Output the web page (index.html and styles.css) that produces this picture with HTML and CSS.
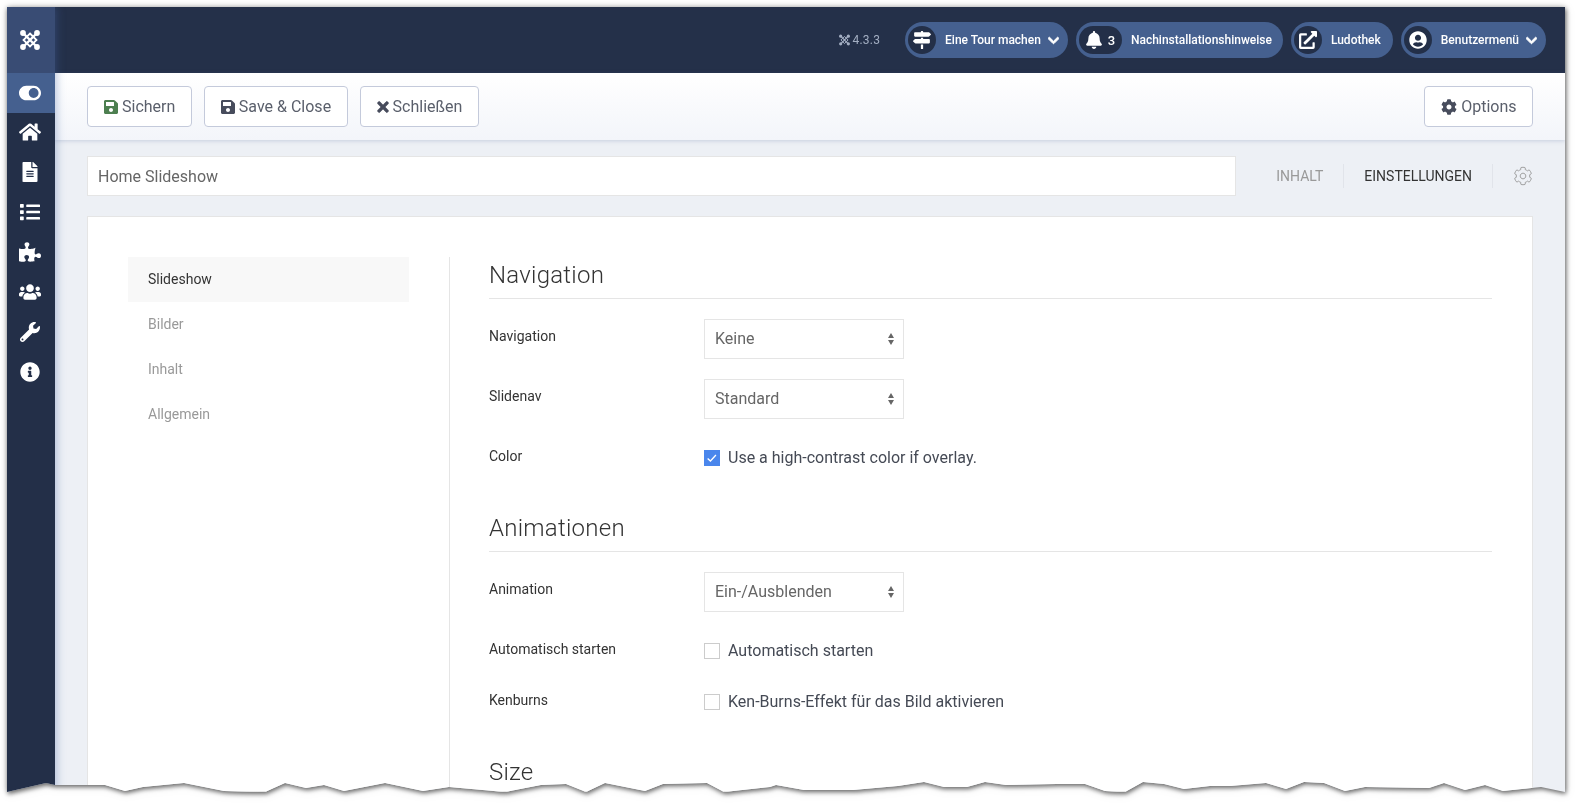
FILE: index.html
```html
<!DOCTYPE html>
<html lang="de">
<head>
  <meta charset="UTF-8">
  <title>Home Slideshow</title>
  <meta name="viewport" content="width=device-width, initial-scale=1">
  <link rel="stylesheet" href="styles.css">
</head>
<body>
<svg class="sprite" aria-hidden="true">
  <symbol id="i-joomla" viewBox="0 0 20 20">
    <g fill="none" stroke="currentColor">
      <path d="M3 3l14 14M17 3L3 17" stroke-width="2.4"/>
      <path d="M10 3.500L16.500 10 10 16.500 3.500 10z" stroke-width="1.800"/>
    </g>
    <g fill="currentColor">
      <circle cx="3" cy="3" r="2.900"/>
      <circle cx="17" cy="3" r="2.900"/>
      <circle cx="3" cy="17" r="2.900"/>
      <circle cx="17" cy="17" r="2.900"/>
    </g>
  </symbol>
  <symbol id="i-toggle" viewBox="0 0 576 512"><path d="M384 64H192C86 64 0 150 0 256s86 192 192 192h192c106 0 192-86 192-192S490 64 384 64zm0 320c-70.800 0-128-57.300-128-128 0-70.800 57.300-128 128-128 70.800 0 128 57.300 128 128 0 70.800-57.300 128-128 128z"/></symbol>
  <symbol id="i-home" viewBox="0 0 576 512"><path d="M280.370 148.260L96 300.110V464a16 16 0 0 0 16 16l112.060-.29a16 16 0 0 0 15.920-16V368a16 16 0 0 1 16-16h64a16 16 0 0 1 16 16v95.640a16 16 0 0 0 16 16.050L464 480a16 16 0 0 0 16-16V300L295.670 148.260a12.190 12.190 0 0 0-15.300 0zM571.600 251.470L488 182.560V44.050a12 12 0 0 0-12-12h-56a12 12 0 0 0-12 12v72.610L318.470 43a48 48 0 0 0-61 0L4.340 251.470a12 12 0 0 0-1.600 16.900l25.500 31A12 12 0 0 0 45.150 301l235.220-193.740a12.190 12.190 0 0 1 15.300 0L530.900 301a12 12 0 0 0 16.900-1.600l25.500-31a12 12 0 0 0-1.700-16.930z"/></symbol>
  <symbol id="i-file" viewBox="0 0 384 512"><path d="M224 136V0H24C10.700 0 0 10.700 0 24v464c0 13.300 10.700 24 24 24h336c13.300 0 24-10.700 24-24V160H248c-13.200 0-24-10.800-24-24zm64 236c0 6.600-5.400 12-12 12H108c-6.600 0-12-5.400-12-12v-8c0-6.600 5.400-12 12-12h168c6.600 0 12 5.400 12 12v8zm0-64c0 6.600-5.400 12-12 12H108c-6.600 0-12-5.400-12-12v-8c0-6.600 5.400-12 12-12h168c6.600 0 12 5.400 12 12v8zm0-72v8c0 6.600-5.400 12-12 12H108c-6.600 0-12-5.400-12-12v-8c0-6.600 5.400-12 12-12h168c6.600 0 12 5.400 12 12zm96-114.100v6.100H256V0h6.100c6.400 0 12.500 2.500 17 7l97.900 98c4.500 4.500 7 10.600 7 16.900z"/></symbol>
  <symbol id="i-list" viewBox="0 0 512 512"><path d="M80 368H16a16 16 0 0 0-16 16v64a16 16 0 0 0 16 16h64a16 16 0 0 0 16-16v-64a16 16 0 0 0-16-16zm0-320H16A16 16 0 0 0 0 64v64a16 16 0 0 0 16 16h64a16 16 0 0 0 16-16V64a16 16 0 0 0-16-16zm0 160H16a16 16 0 0 0-16 16v64a16 16 0 0 0 16 16h64a16 16 0 0 0 16-16v-64a16 16 0 0 0-16-16zm416 176H176a16 16 0 0 0-16 16v32a16 16 0 0 0 16 16h320a16 16 0 0 0 16-16v-32a16 16 0 0 0-16-16zm0-320H176a16 16 0 0 0-16 16v32a16 16 0 0 0 16 16h320a16 16 0 0 0 16-16V80a16 16 0 0 0-16-16zm0 160H176a16 16 0 0 0-16 16v32a16 16 0 0 0 16 16h320a16 16 0 0 0 16-16v-32a16 16 0 0 0-16-16z"/></symbol>
  <symbol id="i-puzzle" viewBox="0 0 576 512"><path d="M519.442 288.651c-41.519 0-59.500 31.593-82.058 31.593C377.409 320.244 432 144 432 144s-196.288 80-196.288-3.297c0-35.827 36.288-46.250 36.288-85.985C272 19.216 243.885 0 210.539 0c-34.654 0-66.366 18.891-66.366 56.346 0 41.364 31.711 59.277 31.711 81.750C175.885 207.719 0 166.758 0 166.758v333.237s178.635 41.047 178.635-28.662c0-22.473-40-40.107-40-81.471 0-37.456 29.250-56.346 63.577-56.346 33.673 0 61.788 19.216 61.788 54.717 0 39.735-36.288 50.158-36.288 85.985 0 60.803 129.675 25.730 181.230 25.730 0 0-34.725-120.101 25.827-120.101 35.962 0 46.423 36.152 86.308 36.152C556.712 416 576 387.990 576 354.443c0-34.199-18.962-65.792-56.558-65.792z"/></symbol>
  <symbol id="i-users" viewBox="0 0 640 512"><path d="M96 224c35.300 0 64-28.700 64-64s-28.700-64-64-64-64 28.700-64 64 28.700 64 64 64zm448 0c35.300 0 64-28.700 64-64s-28.700-64-64-64-64 28.700-64 64 28.700 64 64 64zm32 32h-64c-17.600 0-33.500 7.100-45.100 18.600 40.300 22.100 68.900 62 75.100 109.400h66c17.700 0 32-14.300 32-32v-32c0-35.300-28.700-64-64-64zm-256 0c61.900 0 112-50.100 112-112S381.900 32 320 32 208 82.100 208 144s50.100 112 112 112zm76.800 32h-8.300c-20.800 10-43.900 16-68.500 16s-47.600-6-68.500-16h-8.300C179.600 288 128 339.600 128 403.200V432c0 26.500 21.500 48 48 48h288c26.500 0 48-21.500 48-48v-28.800c0-63.600-51.600-115.200-115.200-115.200zm-223.700-13.400C161.500 263.100 145.600 256 128 256H64c-35.300 0-64 28.700-64 64v32c0 17.700 14.300 32 32 32h65.900c6.300-47.400 34.900-87.300 75.200-109.400z"/></symbol>
  <symbol id="i-wrench" viewBox="0 0 512 512"><path d="M507.730 109.100c-2.240-9.030-13.540-12.090-20.120-5.510l-74.360 74.360-67.880-11.310-11.310-67.880 74.360-74.360c6.620-6.620 3.430-17.900-5.660-20.160-47.380-11.740-99.550.91-136.580 37.930-39.640 39.640-50.550 97.100-34.050 147.200L18.740 402.760c-24.990 24.990-24.990 65.510 0 90.500 24.990 24.990 65.510 24.990 90.500 0l213.210-213.210c50.120 16.710 107.470 5.680 147.370-34.220 37.070-37.070 49.700-89.320 37.910-136.730zM64 472c-13.250 0-24-10.750-24-24 0-13.260 10.750-24 24-24s24 10.740 24 24c0 13.250-10.750 24-24 24z"/></symbol>
  <symbol id="i-info" viewBox="0 0 512 512"><path d="M256 8C119.043 8 8 119.083 8 256c0 136.997 111.043 248 248 248s248-111.003 248-248C504 119.083 392.957 8 256 8zm0 110c23.196 0 42 18.804 42 42s-18.804 42-42 42-42-18.804-42-42 18.804-42 42-42zm56 254c0 6.627-5.373 12-12 12h-88c-6.627 0-12-5.373-12-12v-24c0-6.627 5.373-12 12-12h12v-64h-12c-6.627 0-12-5.373-12-12v-24c0-6.627 5.373-12 12-12h64c6.627 0 12 5.373 12 12v100h12c6.627 0 12 5.373 12 12v24z"/></symbol>
  <symbol id="i-save" viewBox="0 0 448 512"><path d="M433.941 129.941l-83.882-83.882A48 48 0 0 0 316.118 32H48C21.490 32 0 53.490 0 80v352c0 26.510 21.490 48 48 48h352c26.510 0 48-21.490 48-48V163.882a48 48 0 0 0-14.059-33.941zM224 416c-35.346 0-64-28.654-64-64 0-35.346 28.654-64 64-64s64 28.654 64 64c0 35.346-28.654 64-64 64zm96-304.520V212c0 6.627-5.373 12-12 12H76c-6.627 0-12-5.373-12-12V108c0-6.627 5.373-12 12-12h228.520c3.183 0 6.235 1.264 8.485 3.515l3.480 3.480A11.996 11.996 0 0 1 320 111.480z"/></symbol>
  <symbol id="i-times" viewBox="0 0 352 512"><path d="M242.720 256l100.070-100.070c12.280-12.280 12.280-32.190 0-44.480l-22.240-22.240c-12.280-12.280-32.190-12.280-44.480 0L176 189.280 75.930 89.210c-12.280-12.280-32.190-12.280-44.480 0L9.210 111.450c-12.280 12.280-12.280 32.190 0 44.480L109.280 256 9.210 356.070c-12.280 12.280-12.280 32.190 0 44.480l22.240 22.240c12.280 12.280 32.200 12.280 44.480 0L176 322.720l100.070 100.070c12.280 12.280 32.200 12.280 44.480 0l22.240-22.240c12.280-12.280 12.280-32.190 0-44.480L242.720 256z"/></symbol>
  <symbol id="i-cog" viewBox="0 0 512 512"><path d="M487.400 315.700l-42.600-24.600c4.300-23.200 4.300-47 0-70.200l42.600-24.600c4.900-2.800 7.100-8.600 5.500-14-11.100-35.600-30-67.800-54.700-94.600-3.800-4.100-10-5.100-14.800-2.300L380.800 110c-17.900-15.400-38.500-27.300-60.800-35.100V25.800c0-5.600-3.900-10.500-9.400-11.700-36.700-8.200-74.300-7.800-109.200 0-5.500 1.200-9.400 6.100-9.400 11.700V75c-22.200 7.900-42.800 19.800-60.800 35.100L88.700 85.500c-4.900-2.800-11-1.900-14.800 2.300-24.700 26.700-43.600 58.900-54.700 94.600-1.700 5.400.6 11.200 5.500 14L67.300 221c-4.300 23.200-4.300 47 0 70.200l-42.600 24.600c-4.900 2.800-7.100 8.600-5.500 14 11.100 35.600 30 67.800 54.700 94.600 3.800 4.100 10 5.100 14.800 2.300l42.600-24.600c17.900 15.400 38.500 27.300 60.800 35.100v49.200c0 5.600 3.900 10.500 9.400 11.700 36.700 8.200 74.300 7.800 109.200 0 5.500-1.200 9.400-6.100 9.400-11.700v-49.200c22.200-7.900 42.800-19.800 60.800-35.100l42.600 24.600c4.900 2.800 11 1.900 14.800-2.300 24.700-26.700 43.600-58.900 54.700-94.600 1.500-5.500-.7-11.300-5.600-14.100zM256 336c-44.100 0-80-35.900-80-80s35.900-80 80-80 80 35.900 80 80-35.900 80-80 80z"/></symbol>
  <symbol id="i-chevron" viewBox="0 0 448 512"><path d="M207.029 381.476L12.686 187.132c-9.373-9.373-9.373-24.569 0-33.941l22.667-22.667c9.357-9.357 24.522-9.375 33.901-.04L224 284.505l154.745-154.021c9.379-9.335 24.544-9.317 33.901.04l22.667 22.667c9.373 9.373 9.373 24.569 0 33.941L240.971 381.476c-9.373 9.372-24.569 9.372-33.942 0z"/></symbol>
  <symbol id="i-bell" viewBox="0 0 448 512"><path d="M224 512c35.320 0 63.970-28.650 63.970-64H160.030c0 35.350 28.650 64 63.970 64zm215.390-149.710c-19.320-20.760-55.470-51.990-55.470-154.290 0-77.700-54.480-139.900-127.940-155.160V32c0-17.670-14.320-32-31.980-32s-31.980 14.330-31.980 32v20.840C118.560 68.100 64.080 130.300 64.080 208c0 102.300-36.150 133.530-55.470 154.290-6 6.450-8.660 14.160-8.610 21.710.11 16.400 12.980 32 32.100 32h383.800c19.120 0 32-15.600 32.100-32 .05-7.550-2.610-15.270-8.610-21.710z"/></symbol>
  <symbol id="i-link" viewBox="0 0 512 512"><path d="M432 320h-32a16 16 0 0 0-16 16v112H64V128h144a16 16 0 0 0 16-16V80a16 16 0 0 0-16-16H48a48 48 0 0 0-48 48v352a48 48 0 0 0 48 48h352a48 48 0 0 0 48-48V336a16 16 0 0 0-16-16zM488 0H360c-21.370 0-32.050 25.910-17 41l35.730 35.730L135 320.370a24 24 0 0 0 0 34L157.670 377a24 24 0 0 0 34 0l243.610-243.680L471 169c15 15 41 4.500 41-17V24a24 24 0 0 0-24-24z"/></symbol>
  <symbol id="i-user" viewBox="0 0 496 512"><path d="M248 8C111 8 0 119 0 256s111 248 248 248 248-111 248-248S385 8 248 8zm0 96c48.600 0 88 39.400 88 88s-39.400 88-88 88-88-39.400-88-88 39.400-88 88-88zm0 344c-58.700 0-111.300-26.600-146.500-68.200 18.800-35.400 55.600-59.800 98.500-59.800 2.400 0 4.800.4 7.100 1.100 13 4.200 26.600 6.900 40.900 6.900 14.300 0 28-2.700 40.900-6.900 2.300-.7 4.700-1.100 7.100-1.100 42.900 0 79.700 24.400 98.500 59.800C359.300 421.400 306.700 448 248 448z"/></symbol>
  <symbol id="i-signs" viewBox="0 0 512 512"><path d="M507.310 84.690L464 41.370c-6-6-14.140-9.370-22.630-9.370H288V16c0-8.840-7.160-16-16-16h-32c-8.840 0-16 7.160-16 16v16H56c-13.250 0-24 10.750-24 24v80c0 13.250 10.750 24 24 24h385.370c8.490 0 16.620-3.370 22.630-9.370l43.310-43.310c6.250-6.260 6.250-16.380 0-22.630zM224 496c0 8.840 7.160 16 16 16h32c8.840 0 16-7.160 16-16V384h-64v112zm232-272H288v-32h-64v32H70.630c-8.490 0-16.620 3.370-22.630 9.370L4.690 276.690c-6.250 6.250-6.250 16.380 0 22.630L48 342.630c6 6 14.140 9.370 22.630 9.370H456c13.250 0 24-10.750 24-24v-80c0-13.250-10.750-24-24-24z"/></symbol>
</svg>

<div class="frame">
<div class="window">

  <aside class="sidebar">
    <a class="logo"><svg class="ico-logo"><use href="#i-joomla"/></svg></a>
    <nav class="side-nav">
      <a class="side-item is-active"><svg class="ico-toggle"><use href="#i-toggle"/></svg></a>
      <a class="side-item"><svg><use href="#i-home"/></svg></a>
      <a class="side-item"><svg><use href="#i-file"/></svg></a>
      <a class="side-item"><svg><use href="#i-list"/></svg></a>
      <a class="side-item"><svg><use href="#i-puzzle"/></svg></a>
      <a class="side-item"><svg><use href="#i-users"/></svg></a>
      <a class="side-item"><svg><use href="#i-wrench"/></svg></a>
      <a class="side-item"><svg><use href="#i-info"/></svg></a>
    </nav>
  </aside>

  <div class="main">
    <header class="topbar">
      <span class="version"><svg><use href="#i-joomla"/></svg>4.3.3</span>
      <a class="pill">
        <span class="pill-icon"><svg><use href="#i-signs"/></svg></span>
        <span class="pill-text">Eine Tour machen</span>
        <svg class="pill-chevron"><use href="#i-chevron"/></svg>
      </a>
      <a class="pill">
        <span class="pill-icon is-wide"><svg><use href="#i-bell"/></svg><b>3</b></span>
        <span class="pill-text">Nachinstallationshinweise</span>
      </a>
      <a class="pill">
        <span class="pill-icon"><svg><use href="#i-link"/></svg></span>
        <span class="pill-text">Ludothek</span>
      </a>
      <a class="pill">
        <span class="pill-icon"><svg><use href="#i-user"/></svg></span>
        <span class="pill-text">Benutzermenü</span>
        <svg class="pill-chevron"><use href="#i-chevron"/></svg>
      </a>
    </header>

    <div class="toolbar">
      <button class="btn"><svg class="ico-green"><use href="#i-save"/></svg>Sichern</button>
      <button class="btn"><svg><use href="#i-save"/></svg>Save &amp; Close</button>
      <button class="btn"><svg class="ico-times"><use href="#i-times"/></svg>Schließen</button>
      <button class="btn btn-right"><svg class="ico-cog"><use href="#i-cog"/></svg>Options</button>
    </div>

    <div class="content">
      <div class="title-row">
        <input class="title-input" type="text" value="Home Slideshow">
        <ul class="tabs">
          <li class="tab">Inhalt</li>
          <li class="tab is-active">Einstellungen</li>
          <li class="tab tab-gear"><svg><use href="#i-cog"/></svg></li>
        </ul>
      </div>

      <div class="card">
        <ul class="sub-nav">
          <li class="is-active">Slideshow</li>
          <li>Bilder</li>
          <li>Inhalt</li>
          <li>Allgemein</li>
        </ul>

        <div class="form">
          <h3>Navigation</h3>
          <div class="row">
            <label>Navigation</label>
            <div class="select"><select><option>Keine</option></select></div>
          </div>
          <div class="row">
            <label>Slidenav</label>
            <div class="select"><select><option>Standard</option></select></div>
          </div>
          <div class="row row-check">
            <label>Color</label>
            <span class="check is-on"><svg viewBox="0 0 16 16"><path d="M3 8.500l3.200 3 6.300-7"/></svg></span>
            <span class="check-text">Use a high-contrast color if overlay.</span>
          </div>

          <h3>Animationen</h3>
          <div class="row">
            <label>Animation</label>
            <div class="select"><select><option>Ein-/Ausblenden</option></select></div>
          </div>
          <div class="row row-check">
            <label>Automatisch starten</label>
            <span class="check"></span>
            <span class="check-text">Automatisch starten</span>
          </div>
          <div class="row row-check">
            <label>Kenburns</label>
            <span class="check"></span>
            <span class="check-text">Ken-Burns-Effekt für das Bild aktivieren</span>
          </div>

          <h3>Size</h3>
        </div>
      </div>
    </div>
  </div>

</div>
</div>
</body>
</html>
```

FILE: styles.css
```css
*, *::before, *::after {
  box-sizing: border-box;
}

html, body {
  height: 100%;
}

body {
  margin: 0;
  background: #fff;
  overflow: hidden;
  font-family: Roboto, "Liberation Sans", sans-serif;
  font-size: 14px;
  color: #333;
}

.sprite {
  display: none;
}

/* screenshot frame: soft shadow around a torn-off bottom edge */
.frame {
  margin: 7px 11px 0 7px;
  filter: drop-shadow(0 0 3px rgba(0, 0, 0, .25)) drop-shadow(1px 2px 2px rgba(0, 0, 0, .5));
}

.window {
  display: flex;
  height: 785px;
  overflow: hidden;
  background: #edf0f5;
  clip-path: polygon(0 0, 1558px 0, 1558px 785px,
    1534px 780px, 1496px 784px, 1478px 778px, 1458px 783px, 1437px 776px, 1422px 781px,
    1358px 780px, 1338px 784px, 1317px 776px, 1297px 775px, 1279px 782px, 1259px 776px,
    1223px 779px, 1203px 779px, 1177px 782px, 1157px 777px, 1136px 775px, 1118px 785px,
    1098px 784px, 1078px 777px, 1050px 777px, 999px 778px, 978px 775px, 960px 780px,
    937px 780px, 917px 775px, 891px 779px, 846px 783px, 797px 783px, 769px 778px,
    763px 780px, 717px 785px, 700px 776px, 656px 777px, 638px 784px, 598px 776px,
    579px 785px, 559px 777px, 534px 778px, 498px 785px, 442px 780px, 416px 784px,
    378px 776px, 337px 784px, 317px 778px, 299px 781px, 278px 776px, 258px 785px,
    217px 784px, 177px 776px, 136px 780px, 118px 784px, 98px 778px, 48px 778px,
    39px 776px, 0 785px);
}

/* sidebar */
.sidebar {
  flex: 0 0 48px;
  background: #232f48;
  box-shadow: 2px 0 8px rgba(70, 100, 170, .35);
  z-index: 2;
}

.logo {
  display: flex;
  align-items: center;
  justify-content: center;
  height: 66px;
  padding-right: 2px;
  background: #394c74;
}

.ico-logo {
  width: 20px;
  height: 20px;
  color: #fff;
}

.side-item {
  display: flex;
  align-items: center;
  justify-content: center;
  height: 40px;
  padding: 0 2px 2px 0;
}

.side-item svg {
  width: 22px;
  height: 20px;
  fill: #fff;
}

.side-item.is-active {
  padding-bottom: 0;
  background: #45608f;
}

/* top bar */
.main {
  flex: 1;
  min-width: 0;
  min-height: 0;
  display: flex;
  flex-direction: column;
}

.topbar {
  flex: 0 0 66px;
  display: flex;
  align-items: center;
  justify-content: flex-end;
  gap: 8px;
  padding-right: 19px;
  background: #243049;
}

.version {
  display: flex;
  align-items: center;
  gap: 3px;
  margin-right: 17px;
  font-size: 12px;
  letter-spacing: .2px;
  color: #a3aec2;
}

.version svg {
  width: 11px;
  height: 12px;
  color: #a3aec2;
}

.pill {
  display: flex;
  align-items: center;
  height: 36px;
  padding: 0 9px 0 3px;
  border-radius: 18px;
  background: #45608f;
  color: #fff;
  font-size: 12px;
  font-weight: 500;
}

.pill-icon {
  display: flex;
  align-items: center;
  justify-content: center;
  gap: 6px;
  width: 28px;
  height: 28px;
  margin-right: 9px;
  border-radius: 14px;
  background: #232f48;
}

.pill-icon svg {
  width: 18px;
  height: 18px;
  fill: #fff;
}

.pill-icon b {
  font-size: 13px;
  font-weight: 500;
}

.pill-icon.is-wide {
  width: 43px;
}

.pill-icon.is-wide svg {
  width: 16px;
}

.pill-text {
  margin-right: 3px;
}

.is-wide + .pill-text {
  margin-right: 2px;
}

.pill-chevron {
  width: 11px;
  height: 13px;
  margin-left: 4px;
  fill: #fff;
  stroke: #fff;
  stroke-width: 40;
}

/* toolbar */
.toolbar {
  flex: 0 0 67px;
  display: flex;
  align-items: center;
  gap: 12px;
  padding: 0 32px;
  background: linear-gradient(#fff, #f3f5fa);
  box-shadow: 0 1px 4px rgba(90, 110, 160, .25);
  z-index: 1;
}

.btn {
  display: flex;
  align-items: center;
  gap: 4px;
  height: 41px;
  padding: 0 15.5px 0 16px;
  border: 1px solid #c4cadb;
  border-radius: 4px;
  background: #fff;
  color: #5a5f6b;
  font: 16px Roboto, sans-serif;
}

.btn svg {
  width: 14px;
  height: 16px;
  fill: #474c5c;
}

.btn .ico-green {
  fill: #4d7f50;
}

.btn .ico-times {
  width: 12px;
  stroke: #474c5c;
  stroke-width: 20;
}

.btn .ico-cog {
  width: 16px;
}

.btn-right {
  margin-left: auto;
}

/* title + tabs */
.content {
  flex: 1;
  min-height: 0;
  display: flex;
  flex-direction: column;
  padding: 16px 32px 0;
}

.title-row {
  display: flex;
  align-items: center;
  flex: 0 0 40px;
  margin-bottom: 20px;
}

.title-input {
  flex: 0 0 1149px;
  height: 40px;
  padding: 0 10px;
  border: 1px solid #e5e5e5;
  outline: none;
  background: #fff;
  color: #666;
  font: 16px Roboto, sans-serif;
}

.tabs {
  display: flex;
  align-items: center;
  flex: 1;
  justify-content: flex-end;
  margin: 0;
  padding: 0;
  list-style: none;
}

.tab {
  display: flex;
  align-items: center;
  height: 24px;
  padding: 0 20px;
  border-left: 1px solid #e1e4ea;
  color: #999;
  font-size: 14px;
  text-transform: uppercase;
}

.tab:first-child {
  border-left: 0;
}

.tab.is-active {
  color: #333;
}

.tab-gear {
  padding: 0 1px 0 21px;
}

.tab-gear svg {
  width: 18px;
  height: 20px;
  fill: none;
  stroke: #999;
  stroke-width: 26;
}

/* card */
.card {
  flex: 1;
  min-height: 0;
  display: flex;
  overflow: hidden;
  padding: 40px 40px 0;
  border: 1px solid #e5e5e5;
  background: #fff;
}

.sub-nav {
  flex: 0 0 322px;
  margin: 0;
  padding: 0 40px 0 0;
  border-right: 1px solid #e5e5e5;
  list-style: none;
}

.sub-nav li {
  height: 45px;
  padding: 0 20px;
  color: #999;
  line-height: 45px;
}

.sub-nav li.is-active {
  background: #f8f8f8;
  color: #333;
}

.form {
  flex: 1;
  padding-left: 39px;
}

h3 {
  margin: 40px 0 20px;
  padding: 3px 0 7px;
  border-bottom: 1px solid #e5e5e5;
  color: #333;
  font-size: 24px;
  font-weight: 300;
  letter-spacing: .25px;
  line-height: 31px;
}

h3:first-child {
  margin-top: 0;
}

.row {
  display: flex;
  align-items: flex-start;
  margin-bottom: 20px;
}

.row label {
  flex: 0 0 215px;
  padding-top: 7px;
  line-height: 20px;
  color: #333;
}

.select {
  position: relative;
  width: 200px;
  height: 40px;
}

.select::before,
.select::after {
  content: "";
  position: absolute;
  right: 10px;
  border-left: 3px solid transparent;
  border-right: 3px solid transparent;
}

.select::before {
  top: 14px;
  border-bottom: 5px solid #666;
}

.select::after {
  top: 21px;
  border-top: 5px solid #666;
}

.select select {
  width: 100%;
  height: 100%;
  padding: 0 10px 2px;
  border: 1px solid #e5e5e5;
  border-radius: 0;
  outline: none;
  background: #fff;
  color: #666;
  font: 16px Roboto, sans-serif;
  appearance: none;
}

.row-check {
  height: 31px;
}

.check {
  flex: 0 0 16px;
  width: 16px;
  height: 16px;
  margin: 11px 8px 0 0;
  border: 1px solid #ccc;
  background: #fff;
}

.check.is-on {
  border-color: #4a86ec;
  background: #4a86ec;
}

.check svg {
  display: block;
  width: 14px;
  height: 14px;
  fill: none;
  stroke: #fff;
  stroke-width: 1.5;
}

.check-text {
  padding-top: 7px;
  font-size: 16px;
  line-height: 24px;
  color: #454a55;
}
```
